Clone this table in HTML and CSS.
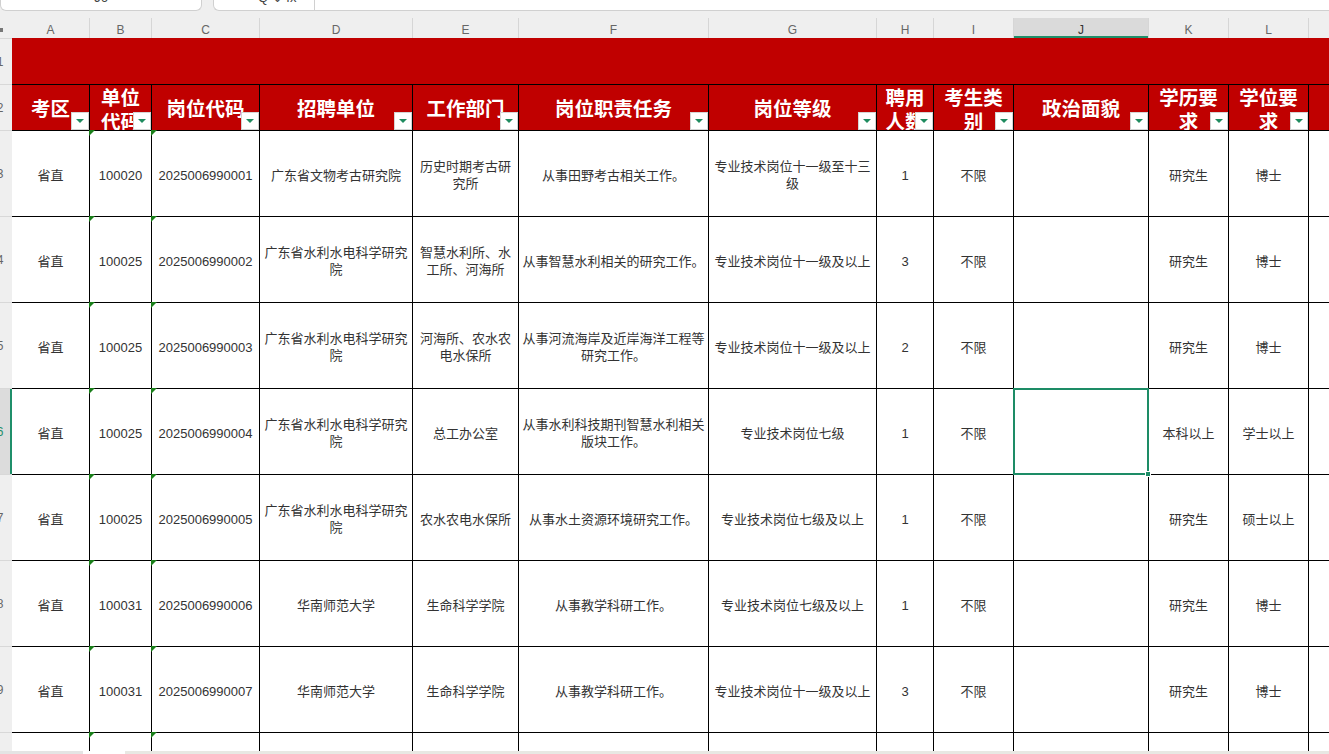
FILE: index.html
```html
<!DOCTYPE html>
<html lang="zh-CN">
<head>
<meta charset="utf-8">
<title>岗位表</title>
<link rel="stylesheet" href="styles.css">
</head>
<body>
<div class="topbar">
  <div class="namebox"><span class="peek">J6</span></div>
  <div class="formula"><span class="peek fx">Q ⌄ fx</span><span class="divider"></span></div>
</div>

<div class="sheet">
  <!-- column letters -->
  <div class="corner"><span class="selall"></span></div>
  <div class="ch nofirst">A</div>
  <div class="ch">B</div>
  <div class="ch">C</div>
  <div class="ch">D</div>
  <div class="ch">E</div>
  <div class="ch">F</div>
  <div class="ch">G</div>
  <div class="ch">H</div>
  <div class="ch">I</div>
  <div class="ch ch-sel">J</div>
  <div class="ch">K</div>
  <div class="ch">L</div>
  <div class="ch"></div>

  <!-- row 1 banner -->
  <div class="rh"><span>1</span></div>
  <div class="banner"></div>

  <!-- row 2 headers -->
  <div class="rh"><span>2</span></div>
  <div class="th nofirst">考区<i class="filter"></i></div>
  <div class="th wrap">单位<br>代码<i class="filter"></i></div>
  <div class="th">岗位代码<i class="filter"></i></div>
  <div class="th">招聘单位<i class="filter"></i></div>
  <div class="th">工作部门<i class="filter"></i></div>
  <div class="th">岗位职责任务<i class="filter"></i></div>
  <div class="th">岗位等级<i class="filter"></i></div>
  <div class="th wrap">聘用<br>人数<i class="filter"></i></div>
  <div class="th wrap">考生类<br>别<i class="filter"></i></div>
  <div class="th">政治面貌<i class="filter"></i></div>
  <div class="th wrap">学历要<br>求<i class="filter"></i></div>
  <div class="th wrap">学位要<br>求<i class="filter"></i></div>
  <div class="th"></div>

  <!-- row 3 -->
  <div class="rh"><span>3</span></div>
  <div class="td nofirst">省直</div>
  <div class="td tri">100020</div>
  <div class="td tri">2025006990001</div>
  <div class="td">广东省文物考古研究院</div>
  <div class="td">历史时期考古研究所</div>
  <div class="td">从事田野考古相关工作。</div>
  <div class="td">专业技术岗位十一级至十三级</div>
  <div class="td">1</div>
  <div class="td">不限</div>
  <div class="td"></div>
  <div class="td">研究生</div>
  <div class="td">博士</div>
  <div class="td"></div>

  <!-- row 4 -->
  <div class="rh"><span>4</span></div>
  <div class="td nofirst">省直</div>
  <div class="td tri">100025</div>
  <div class="td tri">2025006990002</div>
  <div class="td">广东省水利水电科学研究院</div>
  <div class="td">智慧水利所、水工所、河海所</div>
  <div class="td">从事智慧水利相关的研究工作。</div>
  <div class="td">专业技术岗位十一级及以上</div>
  <div class="td">3</div>
  <div class="td">不限</div>
  <div class="td"></div>
  <div class="td">研究生</div>
  <div class="td">博士</div>
  <div class="td"></div>

  <!-- row 5 -->
  <div class="rh"><span>5</span></div>
  <div class="td nofirst">省直</div>
  <div class="td tri">100025</div>
  <div class="td tri">2025006990003</div>
  <div class="td">广东省水利水电科学研究院</div>
  <div class="td">河海所、农水农电水保所</div>
  <div class="td">从事河流海岸及近岸海洋工程等研究工作。</div>
  <div class="td">专业技术岗位十一级及以上</div>
  <div class="td">2</div>
  <div class="td">不限</div>
  <div class="td"></div>
  <div class="td">研究生</div>
  <div class="td">博士</div>
  <div class="td"></div>

  <!-- row 6 (selected row) -->
  <div class="rh rh-sel"><span>6</span></div>
  <div class="td nofirst">省直</div>
  <div class="td tri">100025</div>
  <div class="td tri">2025006990004</div>
  <div class="td">广东省水利水电科学研究院</div>
  <div class="td">总工办公室</div>
  <div class="td">从事水利科技期刊智慧水利相关版块工作。</div>
  <div class="td">专业技术岗位七级</div>
  <div class="td">1</div>
  <div class="td">不限</div>
  <div class="td"><span class="selbox"><span class="handle"></span></span></div>
  <div class="td">本科以上</div>
  <div class="td">学士以上</div>
  <div class="td"></div>

  <!-- row 7 -->
  <div class="rh"><span>7</span></div>
  <div class="td nofirst">省直</div>
  <div class="td tri">100025</div>
  <div class="td tri">2025006990005</div>
  <div class="td">广东省水利水电科学研究院</div>
  <div class="td">农水农电水保所</div>
  <div class="td">从事水土资源环境研究工作。</div>
  <div class="td">专业技术岗位七级及以上</div>
  <div class="td">1</div>
  <div class="td">不限</div>
  <div class="td"></div>
  <div class="td">研究生</div>
  <div class="td">硕士以上</div>
  <div class="td"></div>

  <!-- row 8 -->
  <div class="rh"><span>8</span></div>
  <div class="td nofirst">省直</div>
  <div class="td tri">100031</div>
  <div class="td tri">2025006990006</div>
  <div class="td">华南师范大学</div>
  <div class="td">生命科学学院</div>
  <div class="td">从事教学科研工作。</div>
  <div class="td">专业技术岗位七级及以上</div>
  <div class="td">1</div>
  <div class="td">不限</div>
  <div class="td"></div>
  <div class="td">研究生</div>
  <div class="td">博士</div>
  <div class="td"></div>

  <!-- row 9 -->
  <div class="rh"><span>9</span></div>
  <div class="td nofirst">省直</div>
  <div class="td tri">100031</div>
  <div class="td tri">2025006990007</div>
  <div class="td">华南师范大学</div>
  <div class="td">生命科学学院</div>
  <div class="td">从事教学科研工作。</div>
  <div class="td">专业技术岗位十一级及以上</div>
  <div class="td">3</div>
  <div class="td">不限</div>
  <div class="td"></div>
  <div class="td">研究生</div>
  <div class="td">博士</div>
  <div class="td"></div>

  <!-- row 10 (cut off) -->
  <div class="rh"><span>10</span></div>
  <div class="td nofirst"></div>
  <div class="td tri"></div>
  <div class="td tri"></div>
  <div class="td"></div>
  <div class="td"></div>
  <div class="td"></div>
  <div class="td"></div>
  <div class="td"></div>
  <div class="td"></div>
  <div class="td"></div>
  <div class="td"></div>
  <div class="td"></div>
  <div class="td"></div>
</div>

<div class="hbar">
  <span class="hbar-a"></span>
  <span class="hbar-gap"></span>
  <span class="hbar-b"></span>
</div>
</body>
</html>
```

FILE: styles.css
```css
* { box-sizing: border-box; }

html, body {
  margin: 0;
  padding: 0;
}

body {
  width: 1329px;
  height: 754px;
  overflow: hidden;
  background: #ffffff;
  color: #333333;
  font-family: "Liberation Sans", "Noto Sans CJK SC", sans-serif;
}

/* ---------- top toolbar strip ---------- */
.topbar {
  height: 18px;
  background: #efefef;
  display: flex;
  align-items: flex-start;
}

.namebox {
  width: 202px;
  height: 11px;
  background: #ffffff;
  border: 1px solid #d0d0d0;
  border-top: none;
  border-radius: 0 0 6px 6px;
  overflow: hidden;
  display: flex;
  justify-content: center;
}

.formula {
  flex: 1;
  margin-left: 11px;
  height: 11px;
  background: #ffffff;
  border: 1px solid #d0d0d0;
  border-top: none;
  border-right: none;
  border-radius: 0 0 0 6px;
  overflow: hidden;
  display: flex;
  align-items: flex-start;
}

.peek {
  font-size: 13px;
  line-height: 13px;
  color: #444;
  margin-top: -9px;
}

.fx {
  margin-left: 44px;
  width: 56px;
}

.divider {
  width: 1px;
  height: 11px;
  background: #d0d0d0;
}

/* ---------- sheet grid ---------- */
.sheet {
  display: grid;
  grid-template-columns: 12px 77px 62px 108px 153px 106px 190px 168px 57px 80px 135px 80px 80px 80px;
  grid-template-rows: 20px 46px 46px repeat(8, 86px);
  width: max-content;
}

.corner {
  background: #efefef;
  position: relative;
}

.selall {
  position: absolute;
  left: 0;
  top: 10px;
  width: 3px;
  height: 4px;
  background: #777;
}

.ch {
  background: #efefef;
  border-left: 1px solid #d6d6d6;
  color: #666666;
  font-size: 12px;
  display: flex;
  align-items: center;
  justify-content: center;
  padding-top: 4px;
}

.ch.nofirst { border-left: none; }

.ch-sel {
  background: #dadada;
  color: #333;
  box-shadow: inset 0 -2px 0 #1f8f6a;
}

/* row headers */
.rh {
  background: #efefef;
  border-top: 1px solid #d8d8d8;
  overflow: hidden;
  display: flex;
  align-items: center;
  font-size: 12px;
  color: #666666;
}

.rh span {
  flex: none;
  width: 24px;
  margin-left: -12px;
  text-align: center;
}

.rh-sel {
  background: #dcdcdc;
  color: #1f8f6a;
  box-shadow: inset -2px 0 0 #1f8f6a;
}

/* banner row */
.banner {
  grid-column: 2 / -1;
  background: #c00000;
}

/* header row */
.th {
  position: relative;
  overflow: hidden;
  background: #c00000;
  border-left: 1px solid #000;
  border-top: 1px solid #000;
  color: #ffffff;
  font-family: "Noto Sans CJK SC", sans-serif;
  font-weight: 700;
  font-size: 19.5px;
  line-height: 24px;
  display: flex;
  align-items: center;
  justify-content: center;
  text-align: center;
  padding: 0 2px;
}

.th.nofirst { border-left: none; }
.th.wrap { align-items: flex-start; }

.filter {
  position: absolute;
  right: 0;
  bottom: 0;
  width: 18px;
  height: 18px;
  background: #ffffff;
  border: 1px solid #d4d4d4;
}

.filter::after {
  content: "";
  position: absolute;
  left: 4px;
  top: 6px;
  border-left: 4px solid transparent;
  border-right: 4px solid transparent;
  border-top: 4px solid #1e8b5f;
}

/* data cells */
.td {
  position: relative;
  border-left: 1px solid #000;
  border-top: 1px solid #000;
  font-size: 13px;
  line-height: 17px;
  display: flex;
  align-items: center;
  justify-content: center;
  text-align: center;
  padding: 3px 2px 0;
  color: #333333;
}

.td.nofirst { border-left: none; }

.td.tri::before {
  content: "";
  position: absolute;
  left: -1px;
  top: -1px;
  width: 6px;
  height: 6px;
  background: #1a7f1a;
  clip-path: polygon(0 0, 100% 0, 0 100%);
}

.selbox {
  position: absolute;
  left: -1px;
  top: -1px;
  right: -1px;
  bottom: -1px;
  border: 2px solid #1d8c66;
  z-index: 2;
}

.handle {
  position: absolute;
  right: -4px;
  bottom: -4px;
  width: 6px;
  height: 6px;
  background: #1d8c66;
  border: 1px solid #ffffff;
}

/* bottom scrollbar strip */
.hbar {
  position: fixed;
  left: 0;
  right: 0;
  bottom: 0;
  height: 3px;
  display: flex;
  z-index: 3;
}

.hbar-a {
  width: 83px;
  background: #e4e4e4;
}

.hbar-gap {
  width: 42px;
  background: #ffffff;
}

.hbar-b {
  flex: 1;
  background: #e8e8e3;
}
```
